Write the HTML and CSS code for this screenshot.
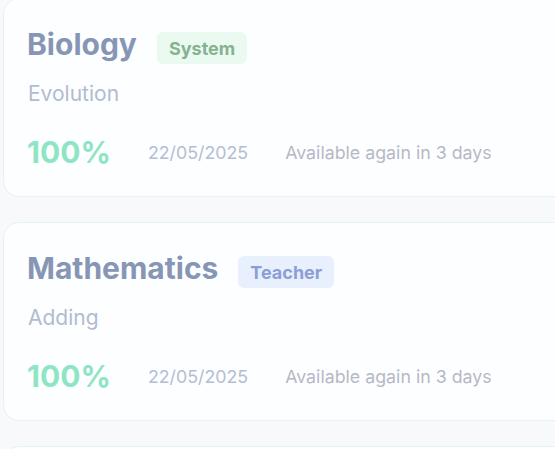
FILE: index.html
```html
<!DOCTYPE html>
<html lang="en">
<head>
<meta charset="utf-8">
<title>Lessons</title>
<link rel="stylesheet" href="styles.css">
</head>
<body>
  <main class="lesson-list">
    <article class="lesson-card">
      <header class="lesson-head">
        <h2 class="lesson-title">Biology</h2>
        <span class="tag tag-system">System</span>
      </header>
      <p class="lesson-topic">Evolution</p>
      <div class="lesson-stats">
        <span class="score">100%</span>
        <span class="date">22/05/2025</span>
        <span class="availability">Available again in 3 days</span>
      </div>
    </article>
    <article class="lesson-card">
      <header class="lesson-head">
        <h2 class="lesson-title">Mathematics</h2>
        <span class="tag tag-teacher">Teacher</span>
      </header>
      <p class="lesson-topic">Adding</p>
      <div class="lesson-stats">
        <span class="score">100%</span>
        <span class="date">22/05/2025</span>
        <span class="availability">Available again in 3 days</span>
      </div>
    </article>
    <article class="lesson-card">
      <header class="lesson-head">
        <h2 class="lesson-title">Chemistry</h2>
        <span class="tag tag-system">System</span>
      </header>
      <p class="lesson-topic">Atoms</p>
      <div class="lesson-stats">
        <span class="score">100%</span>
        <span class="date">22/05/2025</span>
        <span class="availability">Available again in 3 days</span>
      </div>
    </article>
  </main>
</body>
</html>
```

FILE: styles.css
```css
html, body {
  margin: 0;
  padding: 0;
}

body {
  background: #f7f9fb;
  font-family: Inter, "Noto Sans", "Liberation Sans", sans-serif;
  overflow: hidden;
  height: 449px;
}

.lesson-list {
  display: flex;
  flex-direction: column;
  gap: 25px;
  margin-top: -2px;
  padding-left: 3px;
}

.lesson-card {
  width: 600px;
  box-sizing: border-box;
  height: 199px;
  flex: none;
  background: #fdfeff;
  border: 1px solid #e4f5ee;
  border-radius: 16px;
  padding: 27px 23px 0;
}

.lesson-head {
  display: flex;
  align-items: flex-start;
  gap: 20px;
}

.lesson-title {
  margin: 0;
  font-size: 30px;
  line-height: 36px;
  font-weight: 700;
  color: #8796b5;
}

.tag {
  margin-top: 6px;
  height: 32px;
  padding: 0 12px;
  border-radius: 6px;
  display: flex;
  align-items: center;
  font-size: 18px;
  font-weight: 700;
}

.tag-system {
  background: #eafaf0;
  color: #86b291;
}

.tag-teacher {
  background: #e8effd;
  color: #8b9ed8;
}

.lesson-topic {
  margin: 17px 0 0 1px;
  font-size: 21px;
  line-height: 26px;
  color: #b1bcd1;
}

.lesson-stats {
  margin-top: 27px;
  display: flex;
  align-items: center;
  gap: 37px;
  height: 36px;
}

.score {
  font-size: 30px;
  font-weight: 700;
  color: #8ee5c3;
}

.date {
  font-size: 17.8px;
  color: #b4bdd3;
}

.availability {
  font-size: 17.8px;
  color: #b5b9c6;
}
```
